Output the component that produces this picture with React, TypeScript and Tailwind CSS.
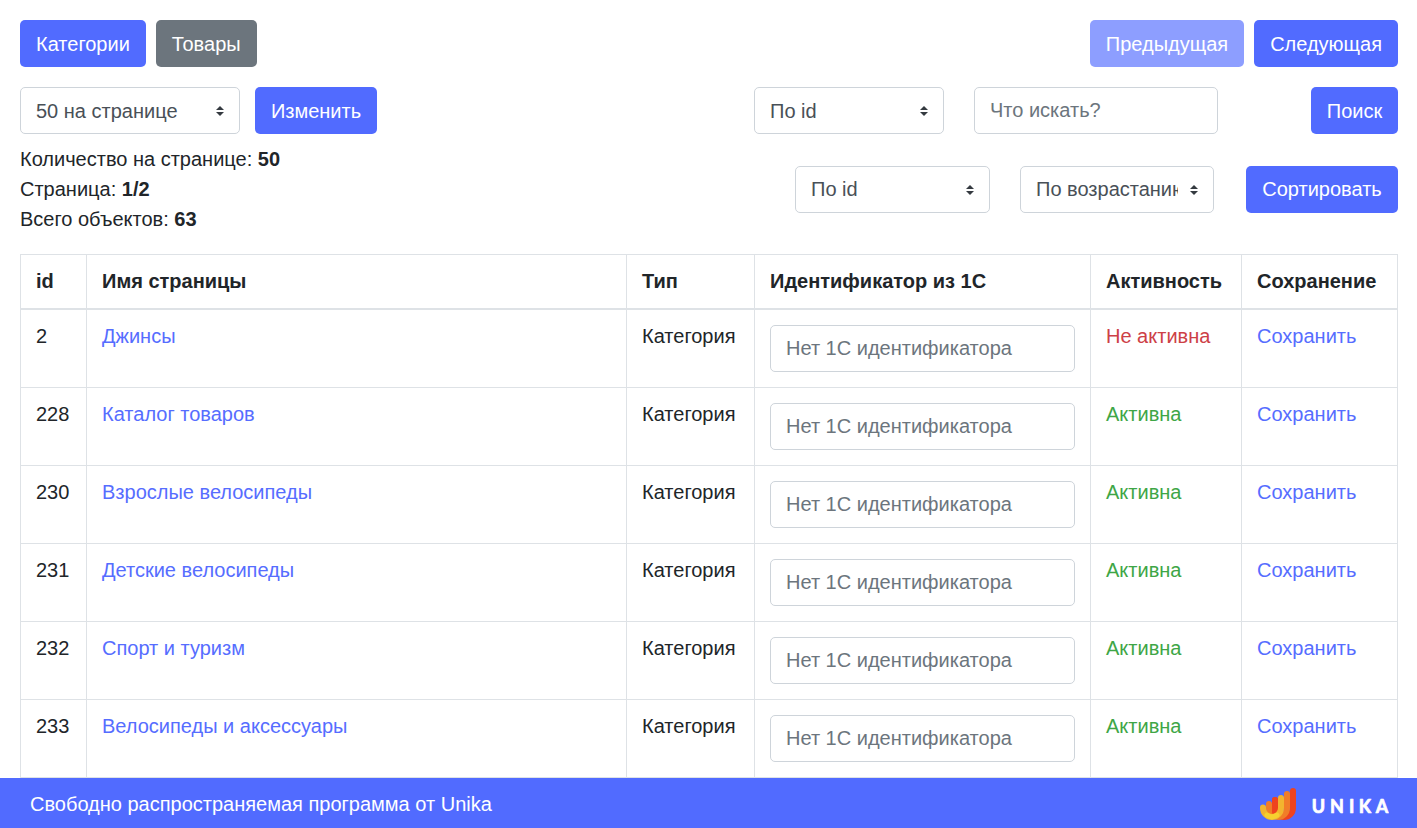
import type { ReactNode } from "react";

function Button({ children, className = "bg-[#516bff]", disabled = false }: { children: ReactNode; className?: string; disabled?: boolean }) {
  return (
    <button
      type="button"
      disabled={disabled}
      className={`h-[47px] shrink-0 rounded-[5px] px-4 text-xl leading-[30px] whitespace-nowrap text-white disabled:opacity-65 ${className}`}
    >
      {children}
    </button>
  );
}

function Select({ options, className }: { options: string[]; className: string }) {
  return (
    <div className={`relative h-[47px] shrink-0 ${className}`}>
      <select className="h-full w-full appearance-none rounded-[5px] border border-[#ced4da] bg-white pr-[35px] pb-[inherit] pl-[15px] text-xl leading-[30px] text-[#495057]">
        {options.map((option) => (
          <option key={option}>{option}</option>
        ))}
      </select>
      <svg viewBox="0 0 4 5" className="pointer-events-none absolute top-[19px] right-4 h-[10px] w-2" fill="#343a40">
        <path d="M2 0L0 2h4zm0 5L0 3h4z" />
      </svg>
    </div>
  );
}

function TextInput({ placeholder, className }: { placeholder: string; className: string }) {
  return (
    <input
      type="text"
      placeholder={placeholder}
      className={`block h-[47px] rounded-[5px] border border-[#ced4da] bg-white px-[15px] text-xl leading-[30px] text-[#495057] placeholder:text-[#6c757d] ${className}`}
    />
  );
}

function Logo() {
  return (
    <svg width="130" height="34" viewBox="1259 787 130 34" className="mt-[2px] shrink-0" role="img" aria-label="Unika">
      <g fill="none" strokeWidth="6" strokeLinecap="round">
        <path d="M1275 800V808A9 9 0 0 0 1293 808V791" stroke="#ef431e" />
        <path d="M1269 804V808A9 9 0 0 0 1287 808V794" stroke="#f17d28" />
        <path d="M1275 800V812" stroke="#ef431e" />
        <path d="M1263 807.500V808A9 9 0 0 0 1281 808V798" stroke="#f2b52f" />
        <path d="M1267 815.200A9 9 0 0 0 1277 815.200" stroke="#f6d02f" strokeWidth="5" />
      </g>
      <text x="1311.7 1329.900 1348.900 1358.700 1375.700" y="813.200" fill="#fff" stroke="#fff" strokeWidth="0.7" strokeLinejoin="round" className="font-['Lato'] text-[18px] font-bold">
        UNIKA
      </text>
    </svg>
  );
}

const columns = ["id", "Имя страницы", "Тип", "Идентификатор из 1С", "Активность", "Сохранение"];

const pages = [
  { id: 2, name: "Джинсы", active: false },
  { id: 228, name: "Каталог товаров", active: true },
  { id: 230, name: "Взрослые велосипеды", active: true },
  { id: 231, name: "Детские велосипеды", active: true },
  { id: 232, name: "Спорт и туризм", active: true },
  { id: 233, name: "Велосипеды и аксессуары", active: true },
];

export default function App() {
  return (
    <div className="flex h-[828px] w-full flex-col overflow-hidden bg-white font-['Liberation_Sans',Arial,sans-serif] text-xl leading-[30px] text-[#212529]">
      <main className="min-h-0 flex-1 overflow-hidden pt-5 pr-[19px] pl-5">
        <div className="flex justify-between">
          <nav className="flex gap-[10px]">
            <Button>Категории</Button>
            <Button className="bg-[#6c757d]">Товары</Button>
          </nav>
          <div className="flex gap-[10px]">
            <Button disabled>Предыдущая</Button>
            <Button>Следующая</Button>
          </div>
        </div>

        <div className="mt-5 flex justify-between">
          <div>
            <div className="flex gap-[15px]">
              <Select options={["50 на странице"]} className="w-[220px]" />
              <Button className="w-[122px] bg-[#516bff] px-0!">Изменить</Button>
            </div>
            <div className="mt-[10px]">
              <p>Количество на странице: <b>50</b></p>
              <p>Страница: <b>1/2</b></p>
              <p>Всего объектов: <b>63</b></p>
            </div>
          </div>
          <div className="flex flex-col gap-8">
            <div className="flex justify-end">
              <Select options={["По id"]} className="w-[190px]" />
              <TextInput placeholder="Что искать?" className="mr-[93px] ml-[30px] w-[244px]" />
              <Button className="w-[87px] bg-[#516bff] px-0!">Поиск</Button>
            </div>
            <div className="flex justify-end">
              <Select options={["По id"]} className="mr-[30px] w-[195px] pb-[2px] [&>select]:h-[47px]" />
              <Select options={["По возрастанию"]} className="mr-8 w-[194px] pb-[2px] [&>select]:h-[47px]" />
              <Button className="w-[152px] bg-[#516bff] px-0! pb-[2px]">Сортировать</Button>
            </div>
          </div>
        </div>

        <table className="mt-5 w-full table-fixed border-collapse border border-[#dee2e6]">
          <colgroup>
            <col className="w-[66px]" />
            <col className="w-[540px]" />
            <col className="w-[128px]" />
            <col className="w-[336px]" />
            <col className="w-[151px]" />
            <col />
          </colgroup>
          <thead>
            <tr className="h-[54px]">
              {columns.map((column) => (
                <th key={column} className="border border-b-2 border-[#dee2e6] px-[15px] py-0 text-left font-bold">{column}</th>
              ))}
            </tr>
          </thead>
          <tbody>
            {pages.map((page) => (
              <tr key={page.id} className="h-[78px] align-top [&>td]:border [&>td]:border-[#dee2e6] [&>td]:px-[15px] [&>td]:pt-[11px]">
                <td>{page.id}</td>
                <td><a href="#" className="text-[#566dff]">{page.name}</a></td>
                <td>Категория</td>
                <td className="pt-[15px]! pb-[15px]"><TextInput placeholder="Нет 1С идентификатора" className="w-full" /></td>
                <td className={page.active ? "text-[#3ea646]" : "text-[#cd4046]"}>{page.active ? "Активна" : "Не активна"}</td>
                <td><a href="#" className="text-[#566dff]">Сохранить</a></td>
              </tr>
            ))}
          </tbody>
        </table>
      </main>

      <footer className="flex h-[50px] shrink-0 items-center justify-between bg-[#516bff] pr-7 pl-[30px] text-white">
        <span className="pt-[1px] leading-[30px]">Свободно распространяемая программа от Unika</span>
        <Logo />
      </footer>
    </div>
  );
}
